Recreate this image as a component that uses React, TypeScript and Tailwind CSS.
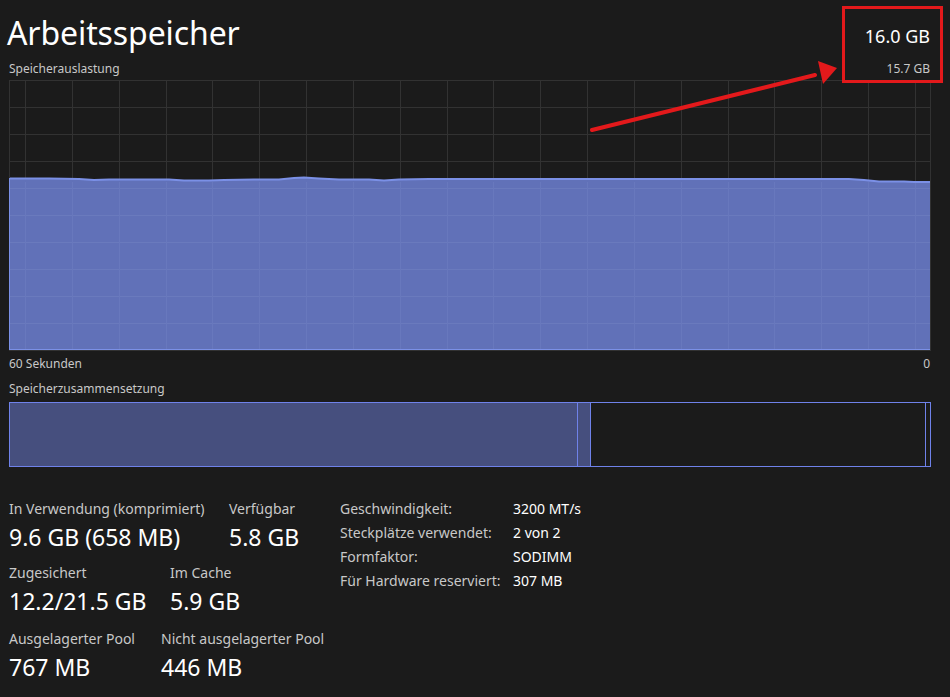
import React from "react";

const W = 921;
const H = 270;

const pts: [number, number][] = [
  [0, 98.5], [40, 98.5], [70, 99], [85, 100], [100, 99.5], [130, 99.5], [160, 99.5], [175, 100.5], [200, 100.5], [215, 100], [245, 99.5], [270, 99.5], [285, 98], [295, 97.5], [310, 98.5], [330, 99.5], [360, 99.5], [375, 100.5], [390, 99.5], [420, 99], [500, 99], [600, 99], [700, 99], [800, 99], [840, 99], [855, 100], [870, 101.5], [895, 101.5], [905, 102], [921, 102],
];

function Chart() {
  const vLines: number[] = [];
  for (let i = 0; i < 20; i++) vLines.push(16 + i * 46.84);
  const hLines: number[] = [];
  for (let i = 1; i < 10; i++) hLines.push(i * 27);
  const line = pts.map((p, i) => `${i === 0 ? "M" : "L"}${p[0]},${p[1]}`).join(" ");
  const area = `${line} L${W},${H} L0,${H} Z`;
  return (
    <svg width={W + 1} height={H + 1} className="block">
      <rect x={0} y={0} width={W + 1} height={H + 1} fill="#1b1b1b" />
      {hLines.map((y) => (
        <line key={"h" + y} x1={0} x2={W} y1={y + 0.5} y2={y + 0.5} stroke="#323232" strokeWidth={1} />
      ))}
      {vLines.map((x) => (
        <line key={"v" + x} x1={Math.round(x) + 0.5} x2={Math.round(x) + 0.5} y1={0} y2={H} stroke="#323232" strokeWidth={1} />
      ))}
      <path d={area} fill="#6171b8" />
      {hLines.map((y) => (
        y > 102 ? <line key={"hh" + y} x1={0} x2={W} y1={y + 0.5} y2={y + 0.5} stroke="#6a7abd" strokeWidth={1} /> : null
      ))}
      {vLines.map((x) => (
        <line key={"vv" + x} x1={Math.round(x) + 0.5} x2={Math.round(x) + 0.5} y1={102} y2={H} stroke="#6878bd" strokeWidth={1} />
      ))}
      <path d={line} fill="none" stroke="#7b90e6" strokeWidth={2} />
      <rect x={0.5} y={0.5} width={W} height={H} fill="none" stroke="#323232" strokeWidth={1} />
      <line x1={0.5} x2={0.5} y1={98} y2={H} stroke="#7b90e6" strokeWidth={1} />
      <line x1={0} x2={W} y1={H - 0.5} y2={H - 0.5} stroke="#7b90e6" strokeWidth={1} />
    </svg>
  );
}

function Stat({ label, value }: { label: string; value: string }) {
  return (
    <div className="flex flex-col">
      <div className="text-[14px] leading-[18px] text-[#c8c8c8]">{label}</div>
      <div className="text-[23px] leading-[30px] text-white mt-[4px]">{value}</div>
    </div>
  );
}

export default function App() {
  const font = { fontFamily: '"Noto Sans", "Open Sans", sans-serif' };
  return (
    <div className="relative w-[950px] h-[697px] overflow-hidden bg-[#1b1b1b] text-white" style={font}>
      <div className="pl-[9px] pr-[20px]">
        <div className="flex justify-between items-end h-[80px]">
          <div className="flex flex-col">
            <div className="text-[32px] leading-[40px] -ml-[2px] tracking-[-0.1px]">Arbeitsspeicher</div>
            <div className="text-[12px] leading-[16px] mt-[8px] mb-[3px] text-[#c8c8c8]">Speicherauslastung</div>
          </div>
          <div className="flex flex-col items-end">
            <div className="text-[18px] leading-[24px]">16.0 GB</div>
            <div className="text-[12px] leading-[16px] mt-[13px] mb-[3px] text-[#c8c8c8]">15.7 GB</div>
          </div>
        </div>
        <Chart />
        <div className="flex justify-between text-[12px] leading-[16px] text-[#c8c8c8] mt-[5px]">
          <span>60 Sekunden</span>
          <span>0</span>
        </div>
        <div className="text-[12px] leading-[16px] text-[#c8c8c8] mt-[9px]">Speicherzusammensetzung</div>
        <div className="mt-[5px] flex h-[65px] w-[922px] border border-[#6f82ea]">
          <div className="w-[567px] bg-[#464f7e]" />
          <div className="w-[13px] bg-[#464f7e] border-l border-[#6f82ea]" />
          <div className="w-[335px] border-l border-[#6f82ea]" />
          <div className="flex-1 border-l border-[#6f82ea]" />
        </div>

        <div className="flex items-start mt-[33px]">
          <div className="flex flex-col gap-[12px] w-[331px]">
            <div className="flex">
              <div className="w-[220px]"><Stat label="In Verwendung (komprimiert)" value="9.6 GB (658 MB)" /></div>
              <Stat label="Verfügbar" value="5.8 GB" />
            </div>
            <div className="flex">
              <div className="w-[161px]"><Stat label="Zugesichert" value="12.2/21.5 GB" /></div>
              <Stat label="Im Cache" value="5.9 GB" />
            </div>
            <div className="flex mt-[2px]">
              <div className="w-[152px]"><Stat label="Ausgelagerter Pool" value="767 MB" /></div>
              <Stat label="Nicht ausgelagerter Pool" value="446 MB" />
            </div>
          </div>
          <div className="grid grid-cols-[173px_auto] content-start text-[14px] leading-[24px] -mt-[3px]">
            <span className="text-[#c8c8c8]">Geschwindigkeit:</span>
            <span>3200 MT/s</span>
            <span className="text-[#c8c8c8]">Steckplätze verwendet:</span>
            <span>2 von 2</span>
            <span className="text-[#c8c8c8]">Formfaktor:</span>
            <span>SODIMM</span>
            <span className="text-[#c8c8c8]">Für Hardware reserviert:</span>
            <span>307 MB</span>
          </div>
        </div>
      </div>

      <div className="absolute left-[842px] top-[6px] w-[101px] h-[77px] border-[3px] border-[#e3191b]" />
      <svg className="absolute left-0 top-0 pointer-events-none" width={950} height={697}>
        <line x1={592} y1={130} x2={815} y2={75} stroke="#e3191b" strokeWidth={4} strokeLinecap="round" />
        <polygon points="837,68 818,61 823,84" fill="#e3191b" />
      </svg>
    </div>
  );
}
